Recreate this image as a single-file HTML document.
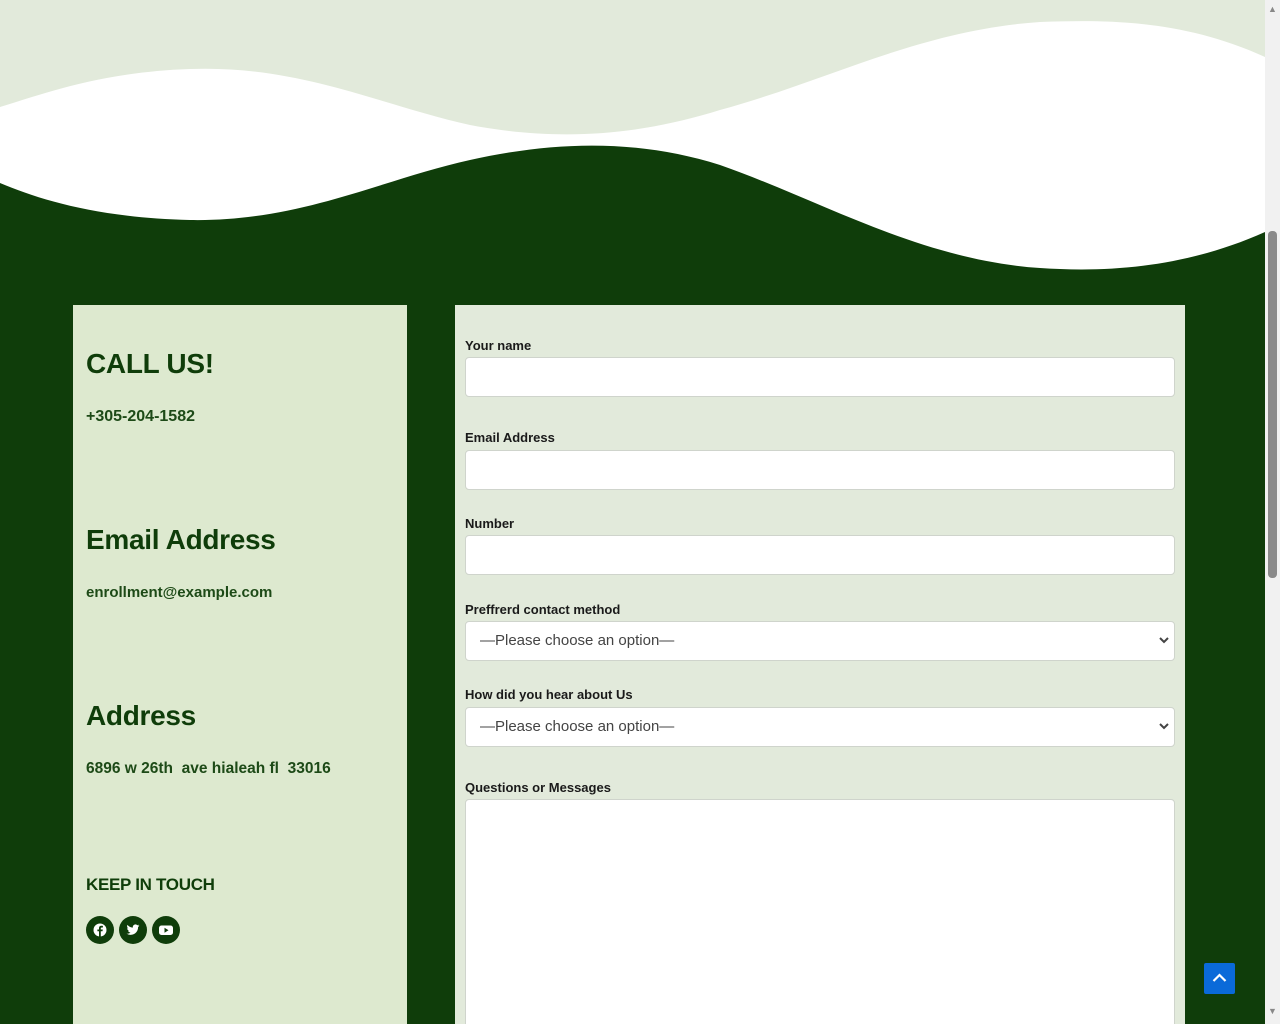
<!DOCTYPE html>
<html style="width:1280px;height:1024px;overflow:hidden"><head><meta charset="utf-8"><style>
*{box-sizing:border-box;margin:0;padding:0}
body{width:1280px;height:1024px;overflow:hidden;position:relative;background:#0f3d0a;font-family:"Liberation Sans",sans-serif}
.a{position:absolute}
.left{left:73px;top:305px;width:334px;height:719px;background:#dde9cf;color:#0f3d0a;overflow:hidden}
.left h2{position:absolute;left:13px;font-size:28px;font-weight:bold;letter-spacing:-0.3px}
.left p{position:absolute;left:13px;font-size:16px;font-weight:bold;color:#1d4a17}
.form{left:455px;top:305px;width:730px;height:719px;background:#e2eadb;overflow:hidden}
.lbl{position:absolute;left:10px;font-size:13px;color:#1a1a1a;font-weight:bold}
.inp{position:absolute;left:10px;width:710px;height:40px;background:#fff;border:1px solid #cfd4cc;border-radius:4px}
.sel{font-size:15px;color:#444;padding:10px 0 0 14px}
.sel svg{position:absolute;right:5px;top:15px}
.ic{display:inline-block;width:28px;height:28px;border-radius:50%;background:#0f3d0a;margin-right:5px;position:relative}
.ic svg{position:absolute;left:7px;top:7px}
</style></head><body>
<svg class="a" style="left:0;top:0" width="1265" height="305" viewBox="0 0 1265 305">
<rect width="1265" height="305" fill="#0f3d0a"/>
<path d="M0 0H1265V232C1180 270 1100 272 1040 268C920 260 820 200 720 165C640 140 560 140 470 160C380 180 300 222 190 220C100 218 40 200 0 183Z" fill="#fff"/>
<path d="M0 0H1265V57C1180 18 1100 20 1040 22C920 30 830 80 720 110C640 135 560 142 470 125C380 105 300 65 190 69C100 72 40 95 0 107Z" fill="#e2eadb"/>
</svg>
<div class="a" style="left:1265px;top:0;width:15px;height:1024px;background:#f1f1f1"></div>
<div class="a" style="left:1268px;top:231px;width:9px;height:347px;background:#8a8a8a;border-radius:4px"></div>
<div class="a" style="left:1268px;top:4px;font-size:9px;color:#888">▲</div>
<div class="a" style="left:1268px;top:1006px;font-size:9px;color:#888">▼</div>
<div class="a left">
<h2 style="top:43px">CALL US!</h2>
<p style="top:103px">+305-204-1582</p>
<h2 style="top:219px">Email Address</h2>
<p style="top:279px;font-size:15px">enrollment@example.com</p>
<h2 style="top:395px">Address</h2>
<p style="top:455px;font-size:15.5px">6896 w 26th&nbsp; ave hialeah fl&nbsp; 33016</p>
<p style="top:570px;font-size:17px;color:#0f3d0a;letter-spacing:-0.3px">KEEP IN TOUCH</p>
<div style="position:absolute;left:13px;top:611px">
<span class="ic"><svg width="14" height="14" viewBox="0 0 14 14"><circle cx="7" cy="7" r="6.5" fill="#fff"/><path d="M7.8 14V8.3H9.5L9.8 6.5H7.8V5.4C7.8 4.9 8 4.5 8.8 4.5H9.9V2.9C9.6 2.9 9 2.8 8.3 2.8 6.9 2.8 6 3.6 6 5.1V6.5H4.4V8.3H6V14Z" fill="#0f3d0a"/></svg></span><span class="ic"><svg width="14" height="14" viewBox="0 0 24 24"><path d="M23 4.6c-.8.4-1.7.6-2.6.7.9-.6 1.6-1.4 2-2.5-.9.5-1.900.9-2.9 1.100A4.5 4.5 0 0 0 11.8 8 12.8 12.8 0 0 1 2.5 3.3a4.5 4.5 0 0 0 1.4 6c-.7 0-1.4-.2-2-.6 0 2.2 1.5 4 3.6 4.5-.7.2-1.4.2-2 .1.6 1.8 2.3 3.1 4.2 3.1A9 9 0 0 1 1 18.3 12.8 12.8 0 0 0 7.9 20.3c8.3 0 12.8-6.9 12.8-12.8v-.6c.9-.6 1.6-1.4 2.3-2.3z" fill="#fff"/></svg></span><span class="ic"><svg width="14" height="14" viewBox="0 0 14 14"><rect x="0" y="2.5" width="14" height="9.5" rx="2.5" fill="#fff"/><path d="M5.5 4.8V9.7L9.5 7.2Z" fill="#0f3d0a"/></svg></span>
</div>
</div>
<div class="a form">
<div class="lbl" style="top:33px">Your name</div>
<div class="inp" style="top:52px"></div>
<div class="lbl" style="top:125px">Email Address</div>
<div class="inp" style="top:145px"></div>
<div class="lbl" style="top:211px">Number</div>
<div class="inp" style="top:230px"></div>
<div class="lbl" style="top:297px">Preffrerd contact method</div>
<div class="inp sel" style="top:316px">—Please choose an option—<svg width="10" height="7" viewBox="0 0 10 7"><path d="M1 1L5 5L9 1" stroke="#444" stroke-width="2" fill="none"/></svg></div>
<div class="lbl" style="top:382px">How did you hear about Us</div>
<div class="inp sel" style="top:402px">—Please choose an option—<svg width="10" height="7" viewBox="0 0 10 7"><path d="M1 1L5 5L9 1" stroke="#444" stroke-width="2" fill="none"/></svg></div>
<div class="lbl" style="top:475px">Questions or Messages</div>
<div class="inp" style="top:494px;height:240px"></div>
</div>
<div class="a" style="left:1204px;top:963px;width:31px;height:31px;background:#0a6ad9;border-radius:2px"><svg width="31" height="31" viewBox="0 0 31 31"><path d="M9.5 18L15.5 12L21.5 18" stroke="#fff" stroke-width="2.2" fill="none"/></svg></div>
</body></html>
